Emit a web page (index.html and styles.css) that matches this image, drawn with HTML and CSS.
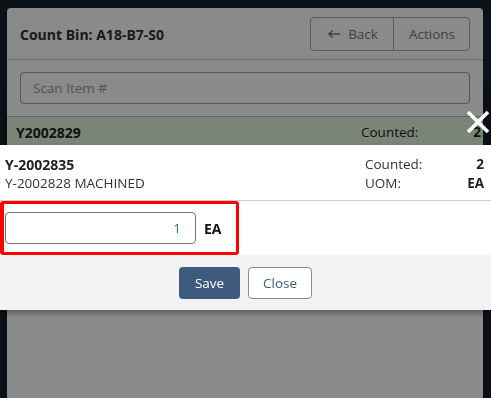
FILE: index.html
```html
<!DOCTYPE html>
<html lang="en">
<head>
    <meta charset="UTF-8">
    <meta name="viewport" content="width=device-width, initial-scale=1.0">
    <title>Count Bin</title>
    <link rel="stylesheet" href="styles.css">
</head>
<body>

    <div class="topbar"></div>

    <!-- Count bin card (behind the dialog) -->
    <div class="bin-card">
        <div class="bin-header">
            <h2>Count Bin: A18-B7-S0</h2>
            <div class="btn-group">
                <button class="btn-ghost">
                    <svg width="14" height="10" viewBox="0 0 14 10"><path d="M13 5H2M5.5 1.5L2 5l3.5 3.5" fill="none" stroke="currentColor" stroke-width="1.4"/></svg>
                    Back
                </button>
                <button class="btn-ghost">Actions</button>
            </div>
        </div>
        <div class="bin-body">
            <input type="text" class="scan-input" placeholder="Scan Item #">
        </div>
        <div class="item-row counted">
            <div class="item-main">
                <strong>Y2002829</strong>
            </div>
            <div class="item-stats">
                <div><span>Counted:</span><b>2</b></div>
                <div><span></span><b>EA</b></div>
            </div>
        </div>
    </div>

    <!-- Dialog -->
    <div class="backdrop"></div>
    <button class="dialog-close" aria-label="Close">
        <svg width="24" height="24" viewBox="0 0 24 24"><path d="M2 2L22 22M22 2L2 22" stroke="#fff" stroke-width="3.6"/></svg>
    </button>

    <div class="dialog">
        <div class="dialog-head">
            <div class="item-main">
                <strong>Y-2002835</strong>
                <span>Y-2002828 MACHINED</span>
            </div>
            <div class="item-stats">
                <div><span>Counted:</span><b>2</b></div>
                <div><span>UOM:</span><b>EA</b></div>
            </div>
        </div>
        <div class="qty-section">
            <div class="qty-box">
                <input type="text" class="qty-input" value="1">
                <b>EA</b>
            </div>
        </div>
        <div class="dialog-foot">
            <button class="btn-save">Save</button>
            <button class="btn-close">Close</button>
        </div>
    </div>

</body>
</html>
```

FILE: styles.css
```css
/* Global Styles */
body {
    font-family: 'Open Sans', 'Noto Sans', sans-serif;
    font-size: 13.5px;
    margin: 0;
    padding: 0;
    background: #131c28;
    color: #222;
    overflow: hidden;
    height: 398px;
}

button {
    font-family: inherit;
    font-size: 13.5px;
    cursor: pointer;
}

.topbar {
    position: absolute;
    left: 0;
    right: 0;
    top: 0;
    height: 86px;
    background: #15212f;
}

/* Card behind the dialog */
.bin-card {
    position: relative;
    margin: 8px 8px 0 7px;
    height: 390px;
    background: #fff;
    border-radius: 4px 4px 0 0;
    overflow: hidden;
}

.bin-header {
    display: flex;
    align-items: center;
    justify-content: space-between;
    padding: 9px 13px 8px 13px;
    border-bottom: 1px solid #c8c8c8;
}

.bin-header h2 {
    margin: 0;
    font-size: 14px;
    font-weight: bold;
    color: #333;
}

.btn-group {
    display: flex;
    height: 32px;
    border: 1px solid #a8a8a8;
    border-radius: 4px;
}

.btn-ghost {
    display: flex;
    align-items: center;
    gap: 7px;
    background: none;
    border: none;
    color: #6d7b8c;
    padding: 0 15px 0 16px;
}

.btn-ghost + .btn-ghost {
    border-left: 1px solid #a8a8a8;
    padding: 0 14px 0 15px;
}

.bin-body {
    padding: 12px 13px 12px 13px;
    border-bottom: 1px solid #b8b8b8;
}

.scan-input {
    box-sizing: border-box;
    width: 100%;
    height: 32px;
    padding: 0 12px;
    border: 1px solid #a0a0a0;
    border-radius: 4px;
    font-family: inherit;
    font-size: 13.5px;
}

.scan-input::placeholder {
    color: #999;
}

.item-row {
    display: flex;
    justify-content: space-between;
    padding: 6px 2px 6px 9px;
    border-bottom: 1px solid #ddd;
}

.item-row.counted {
    background: #e1f5dd;
}

.item-main {
    display: flex;
    flex-direction: column;
    line-height: 19px;
}

.item-main strong {
    font-size: 14px;
}

.item-stats {
    width: 120px;
    line-height: 19px;
}

.item-stats div {
    display: flex;
    justify-content: space-between;
}

/* Dialog */
.backdrop {
    position: fixed;
    inset: 0;
    background: rgba(0, 0, 0, 0.46);
}

.dialog-close {
    position: fixed;
    top: 110px;
    right: 1px;
    padding: 0;
    background: none;
    border: none;
    line-height: 0;
}

.dialog {
    position: fixed;
    top: 145px;
    left: 0;
    right: 0;
    background: #fff;
    box-shadow: 0 3px 6px rgba(0, 0, 0, 0.35);
}

.dialog-head {
    display: flex;
    justify-content: space-between;
    height: 56px;
    padding: 10px 7px 0 5px;
    box-sizing: border-box;
    border-bottom: 1px solid #ccc;
}

.dialog-head .item-main span {
    color: #333;
}

.dialog-head .item-stats {
    width: 119px;
}

.dialog-head .item-stats span {
    color: #333;
}

.qty-section {
    height: 54px;
}

.qty-box {
    display: flex;
    align-items: center;
    gap: 8px;
    width: 239px;
    box-sizing: border-box;
    height: 54px;
    padding: 0 0 0 1px;
    border: 3px solid #ff0000;
    border-left-width: 4px;
    border-radius: 3px;
}

.qty-input {
    box-sizing: border-box;
    width: 191px;
    height: 32px;
    padding: 0 14px;
    border: 1px solid #777;
    border-radius: 4px;
    text-align: right;
    font-family: inherit;
    font-size: 13.5px;
    color: #3a6a9a;
}

.qty-box b {
    font-size: 14px;
    color: #111;
}

.dialog-foot {
    display: flex;
    justify-content: center;
    gap: 8px;
    height: 55px;
    padding-top: 12px;
    box-sizing: border-box;
    background: #f2f2f2;
}

.btn-save {
    width: 61px;
    height: 32px;
    background: #3e5b7e;
    color: #fff;
    border: none;
    border-radius: 4px;
}

.btn-close {
    width: 64px;
    height: 32px;
    background: #fff;
    color: #3e5b7e;
    border: 1px solid #888;
    border-radius: 4px;
}
```
